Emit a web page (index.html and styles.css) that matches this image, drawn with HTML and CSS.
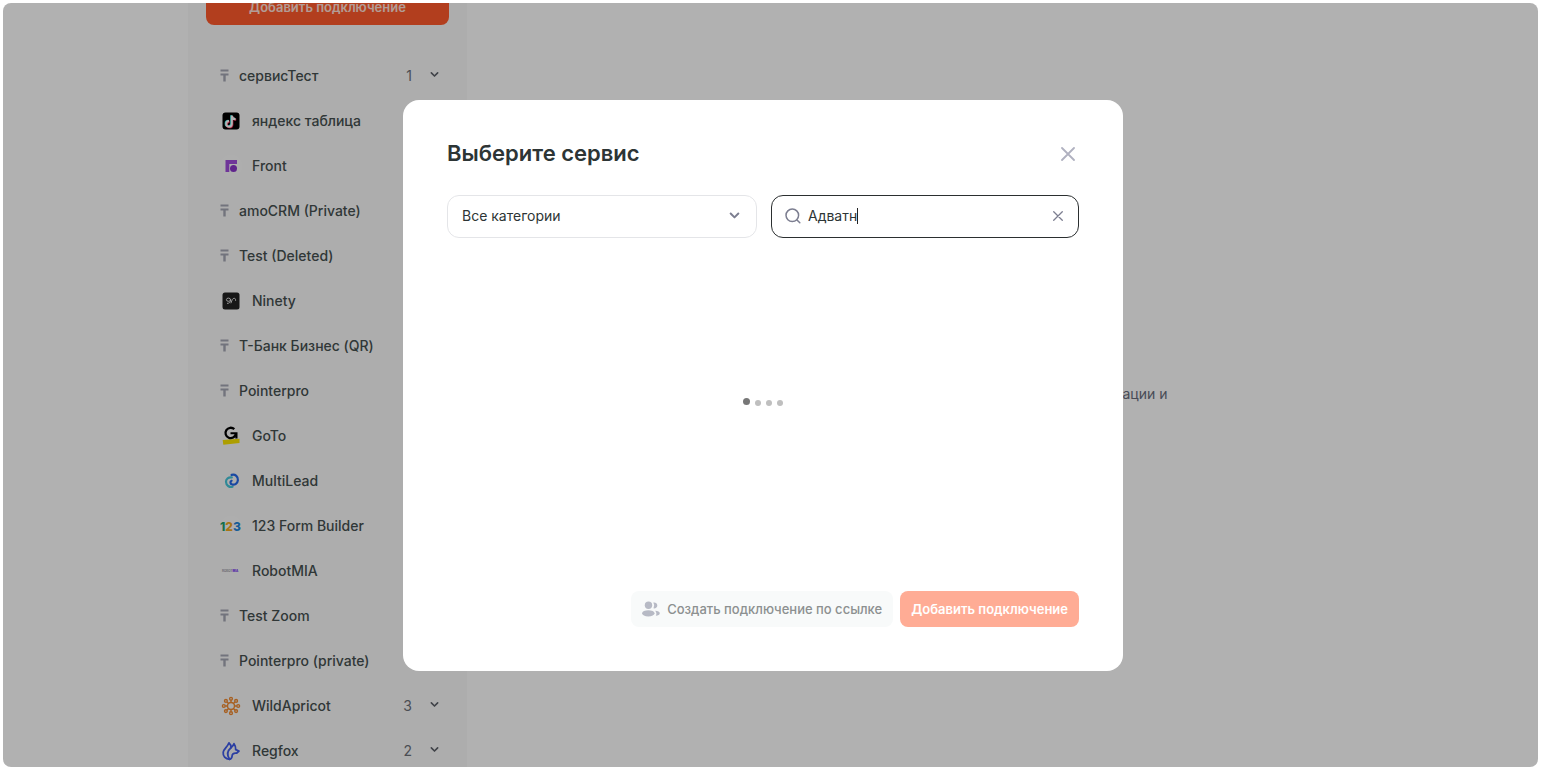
FILE: index.html
```html
<!DOCTYPE html>
<html lang="ru">
<head>
  <meta charset="UTF-8" />
  <meta name="viewport" content="width=device-width, initial-scale=1.0"/>
  <title>Подключения</title>
  <link rel="stylesheet" href="styles.css">
</head>
<body>
<svg class="sprite" aria-hidden="true">
  <symbol id="tenge" viewBox="0 0 9 13">
    <path d="M0.500 0.500h8v2h-8zM0.500 4.500h8v2H5.700V12.500H3.300V6.500H0.500z"/>
  </symbol>
  <symbol id="chevron" viewBox="0 0 10 10">
    <path d="M1.500 3.200 5 6.700l3.500-3.500" fill="none" stroke="currentColor" stroke-width="1.800" stroke-linecap="round" stroke-linejoin="round"/>
  </symbol>
  <symbol id="cross" viewBox="0 0 14 14">
    <path d="M1 1l12 12M13 1 1 13" fill="none" stroke="currentColor" stroke-width="1.800" stroke-linecap="round"/>
  </symbol>
</svg>

<div class="app">
  <div class="page">
    <aside class="sidebar">
      <button type="button" class="btn btn-primary">Добавить подключение</button>
      <ul class="services">
        <li class="service">
          <svg class="mark"><use href="#tenge"/></svg>
          <span class="name">сервисТест</span>
          <span class="count">1</span>
          <svg class="arrow"><use href="#chevron"/></svg>
        </li>
        <li class="service">
          <svg class="logo" viewBox="0 0 22 22">
            <rect x="2.500" y="2.500" width="17" height="17" rx="3" fill="#000"/>
            <g fill="none" stroke-width="2">
              <path d="M11.200 5.300v8.300a2.800 2.800 0 1 1-2.800-2.900M11.200 5.600c.3 1.900 1.600 3 3.800 3.200" stroke="#25f4ee"/>
              <path d="M12.400 6.300v8.300a2.800 2.800 0 1 1-2.800-2.900M12.400 6.600c.3 1.900 1.600 3 3.800 3.200" stroke="#fe2c55"/>
              <path d="M11.800 5.500V14A2.800 2.800 0 1 1 9 11.100M11.800 6c.3 1.900 1.600 3 3.800 3.200" stroke="#fff"/>
            </g>
          </svg>
          <span class="name">яндекс таблица</span>
        </li>
        <li class="service">
          <svg class="logo" viewBox="0 0 22 22">
            <circle cx="11" cy="11" r="11" fill="#fff" opacity=".35"/>
            <path d="M5.500 5h11.500v4H9.300v8H5.500z" fill="#a04ddc"/>
            <circle cx="13.500" cy="13.500" r="3.500" fill="#8934c9"/>
          </svg>
          <span class="name">Front</span>
        </li>
        <li class="service">
          <svg class="mark"><use href="#tenge"/></svg>
          <span class="name">amoCRM (Private)</span>
        </li>
        <li class="service">
          <svg class="mark"><use href="#tenge"/></svg>
          <span class="name">Test (Deleted)</span>
        </li>
        <li class="service">
          <svg class="logo" viewBox="0 0 22 22">
            <rect x="2.500" y="2.500" width="17" height="17" rx="2.500" fill="#222"/>
            <g fill="none" stroke="#ddd" stroke-width="1" stroke-linecap="round">
              <path d="M10.600 9.700a2.100 1.600 0 1 0-2.300 1.600c1.300 0 2.300-.8 2.300-1.800 0 2.600-1.100 3.900-3.200 3.900"/>
              <path d="M11 12.900c1-3.200 1.700-4.600 3.200-4.600 1.100 0 1.500.8 1.400 2.100"/>
            </g>
          </svg>
          <span class="name">Ninety</span>
        </li>
        <li class="service">
          <svg class="mark"><use href="#tenge"/></svg>
          <span class="name">Т-Банк Бизнес (QR)</span>
        </li>
        <li class="service">
          <svg class="mark"><use href="#tenge"/></svg>
          <span class="name">Pointerpro</span>
        </li>
        <li class="service">
          <svg class="logo" viewBox="0 0 22 22">
            <path d="M2.700 15 19.500 13.800v4.200L3.300 19.800z" fill="#f8e300"/>
            <path d="M14.300 4.200A5.200 5.200 0 1 0 15.800 9" fill="none" stroke="#000" stroke-width="2.300"/>
            <path d="M10.500 7.200h7v6.200h-2.200V9.300h-4.800z" fill="#000"/>
          </svg>
          <span class="name">GoTo</span>
        </li>
        <li class="service">
          <svg class="logo" viewBox="0 0 22 22" fill="none" stroke-width="2.200" stroke-linecap="round">
            <path d="M11.800 7.400c-3.300-.5-5.900 1.400-5.800 4.400.1 3.700 3.400 5.800 6.600 5" stroke="#45c5d8"/>
            <path d="M11.600 4.900c3.800-1 6.600 1.700 6.300 5.200-.3 3.200-3.200 5.100-5.700 4.400-2-.6-2.400-2.900-.6-3.700" stroke="#2468e8"/>
          </svg>
          <span class="name">MultiLead</span>
        </li>
        <li class="service">
          <svg class="logo logo-123" viewBox="0 0 22 22">
            <circle cx="11" cy="11" r="10.500" fill="#fff" opacity=".25"/>
            <text x="0" y="15.500"><tspan class="one">1</tspan><tspan class="two">2</tspan><tspan class="three">3</tspan></text>
          </svg>
          <span class="name">123 Form Builder</span>
        </li>
        <li class="service">
          <svg class="logo logo-robot" viewBox="0 0 22 22">
            <text x="2" y="12">ROBOT<tspan class="mia">MIA</tspan></text>
          </svg>
          <span class="name">RobotMIA</span>
        </li>
        <li class="service">
          <svg class="mark"><use href="#tenge"/></svg>
          <span class="name">Test Zoom</span>
        </li>
        <li class="service">
          <svg class="mark"><use href="#tenge"/></svg>
          <span class="name">Pointerpro (private)</span>
        </li>
        <li class="service">
          <svg class="logo" viewBox="0 0 22 22" fill="none" stroke="#ef8a32" stroke-width="1.400">
            <circle cx="11" cy="11" r="3.500"/>
            <path d="M11 5.300v2.200M11 14.500v2.200M5.300 11h2.200M14.500 11h2.200M7 7l1.600 1.600M13.400 13.400 15 15M15 7l-1.600 1.600M8.600 13.400 7 15"/>
            <g>
              <circle cx="11" cy="3.800" r="1.400"/><circle cx="11" cy="18.200" r="1.400"/>
              <circle cx="3.800" cy="11" r="1.400"/><circle cx="18.200" cy="11" r="1.400"/>
              <circle cx="5.900" cy="5.900" r="1.400"/><circle cx="16.100" cy="16.100" r="1.400"/>
              <circle cx="16.100" cy="5.900" r="1.400"/><circle cx="5.900" cy="16.100" r="1.400"/>
            </g>
          </svg>
          <span class="name">WildApricot</span>
          <span class="count">3</span>
          <svg class="arrow"><use href="#chevron"/></svg>
        </li>
        <li class="service">
          <svg class="logo" viewBox="0 0 22 22" fill="none" stroke="#3f5be8" stroke-width="1.800" stroke-linejoin="round" stroke-linecap="round">
            <path d="M9.600 19.300c-4.300-.3-6.800-3.300-6.400-7C3.600 8.700 7.600 7 9 2.800c1.500 1.400 2.200 3 2.200 4.800"/>
            <path d="M9.600 19.300C6.500 14.700 7.200 11 10.500 8.200c1.600-1.400 3-2.700 3.500-4.500 1.600 2 1.700 4.500 1.700 6l3.300 1.300-2.500 2.200c-3-.4-4.300.8-4.500 3.300-.1 1.500-1.100 2.500-2.400 2.800z"/>
          </svg>
          <span class="name">Regfox</span>
          <span class="count">2</span>
          <svg class="arrow"><use href="#chevron"/></svg>
        </li>
      </ul>
    </aside>
    <main class="content">
      <p class="hint">ации и</p>
    </main>
  </div>

  <div class="overlay">
    <div class="modal" role="dialog" aria-modal="true" aria-labelledby="modal-title">
      <header class="modal-head">
        <h2 id="modal-title">Выберите сервис</h2>
        <button type="button" class="icon-btn close" aria-label="Закрыть">
          <svg><use href="#cross"/></svg>
        </button>
      </header>

      <div class="filters">
        <div class="field">
          <select class="category" aria-label="Категория">
            <option>Все категории</option>
          </select>
          <svg class="select-arrow"><use href="#chevron"/></svg>
        </div>
        <div class="field field-active">
          <svg class="search-icon" viewBox="0 0 16 16" fill="none" stroke="currentColor" stroke-width="1.500" stroke-linecap="round">
            <circle cx="7.300" cy="7.300" r="6.300"/>
            <path d="M12 12l2.800 2.800"/>
          </svg>
          <input type="text" class="search" value="Адватн" aria-label="Поиск сервиса"/>
          <span class="caret"></span>
          <button type="button" class="icon-btn clear" aria-label="Очистить">
            <svg><use href="#cross"/></svg>
          </button>
        </div>
      </div>

      <div class="loader">
        <span class="dot dot-active"></span>
        <span class="dot"></span>
        <span class="dot"></span>
        <span class="dot"></span>
      </div>

      <footer class="modal-foot">
        <button type="button" class="btn btn-secondary" disabled>
          <svg class="people" viewBox="0 0 18 16">
            <circle cx="6.500" cy="4.200" r="3.700"/>
            <ellipse cx="6.300" cy="12.300" rx="6.200" ry="3.100"/>
            <path d="M11.300 1.600a3 3 0 1 1 .2 5.700 5.400 5.400 0 0 0-.2-5.700zM13.200 9.700c2.600.1 4.600 1.100 4.600 2.500 0 1.400-1.700 2.300-4 2.500 1-1.700.7-3.600-.6-5z"/>
          </svg>
          Создать подключение по ссылке
        </button>
        <button type="button" class="btn btn-primary" disabled>Добавить подключение</button>
      </footer>
    </div>
  </div>
</div>
</body>
</html>
```
FILE: styles.css
```css
* {
  box-sizing: border-box;
}
body {
  margin: 0;
  padding: 3px;
  height: 100vh;
  background: #fff;
  font-family: Inter, "Liberation Sans", sans-serif;
  font-size: 14px;
  color: #2d3535;
}
button, input, select {
  font-family: inherit;
  font-size: inherit;
  color: inherit;
}
.sprite {
  display: none;
}
.app {
  position: relative;
  height: 100%;
  padding-right: 15px;
  border-radius: 8px;
  overflow: hidden;
  background: #fefefe;
}
.page {
  display: flex;
  max-width: 1150px;
  margin: 0 auto;
}

/* sidebar */
.sidebar {
  width: 279px;
  margin-top: -14px;
  padding: 0 18px;
  background: #f8f8f8;
}
.btn {
  display: flex;
  align-items: center;
  justify-content: center;
  height: 36px;
  padding: 0 11px;
  border: none;
  border-radius: 8px;
  font-size: 13px;
  font-weight: 600;
}
.btn-primary {
  background: #ff5a2c;
  color: #fff;
}
.sidebar .btn {
  width: 100%;
  color: #ffe0d8;
}
.services {
  margin: 28px 0 0;
  padding: 0;
  list-style: none;
}
.service {
  display: flex;
  align-items: center;
  gap: 10px;
  height: 45px;
  padding: 0 9px 0 14px;
}
.mark {
  width: 9px;
  height: 13px;
  fill: #a4a6b4;
}
.logo {
  width: 22px;
  height: 22px;
}
.logo-123 text {
  font-size: 12px;
  font-weight: 800;
}
.logo-123 .one {
  fill: #23a06c;
}
.logo-123 .two {
  fill: #f3a81e;
}
.logo-123 .three {
  fill: #2385d8;
}
.logo-robot text {
  font-size: 3px;
  font-weight: 600;
  fill: #8c8c98;
}
.logo-robot .mia {
  font-weight: 800;
  fill: #7a3ff0;
}
.name {
  flex: 1;
  font-weight: 500;
  color: #465050;
}
.count {
  color: #6c7078;
}
.arrow {
  width: 9px;
  height: 9px;
  margin: 0 1px 2px 8px;
  color: #5c6068;
}

.content {
  flex: 1;
}
.hint {
  max-width: 530px;
  margin: 381px auto 0;
  line-height: 20px;
  text-align: right;
  color: #686c7c;
}

/* modal */
.overlay {
  position: absolute;
  inset: 0;
  display: flex;
  align-items: center;
  justify-content: center;
  padding-right: 15px;
  background: rgba(0,0,0,0.3);
}
.modal {
  display: flex;
  flex-direction: column;
  width: 720px;
  max-width: 100%;
  min-height: 571px;
  padding: 39px 44px 44px;
  border-radius: 16px;
  background: #fff;
}
.modal-head {
  display: flex;
  align-items: center;
  justify-content: space-between;
  height: 28px;
  margin-bottom: 28px;
}
.modal-head h2 {
  margin: 0;
  font-size: 22px;
  font-weight: 600;
  line-height: 28px;
}
.icon-btn {
  display: flex;
  padding: 4px;
  border: none;
  background: none;
}
.close {
  margin-top: 2px;
  color: #b0b1c0;
}
.close svg {
  width: 14px;
  height: 14px;
}
.filters {
  display: flex;
  gap: 14px;
}
.field {
  flex: 1;
  display: flex;
  align-items: center;
  height: 43px;
  padding: 0 14px 1px;
  border: 1px solid #e4e5e8;
  border-radius: 12px;
}
.field-active {
  padding: 0 13px 1px;
  border-color: #2b2f30;
}
.category {
  flex: 1;
  padding: 0;
  border: none;
  outline: none;
  appearance: none;
  background: none;
}
.select-arrow {
  width: 11px;
  height: 11px;
  margin-right: 2px;
  color: #7c7e90;
}
.search-icon {
  width: 16px;
  height: 16px;
  margin-right: 7px;
  color: #7c7e90;
}
.search {
  field-sizing: content;
  padding: 0;
  border: none;
  outline: none;
}
.caret {
  width: 1px;
  height: 16px;
  background: #222;
}
.clear {
  margin-left: auto;
  padding: 2px;
  color: #7c7e90;
}
.clear svg {
  width: 10px;
  height: 10px;
}
.loader {
  flex: 1;
  display: flex;
  align-items: center;
  justify-content: center;
  gap: 5px;
}
.dot {
  width: 6px;
  height: 6px;
  border-radius: 50%;
  background: #bfbfbf;
}
.dot-active {
  width: 7px;
  height: 7px;
  margin-bottom: 2px;
  background: #777;
}
.modal-foot {
  display: flex;
  justify-content: flex-end;
  gap: 7px;
  padding-top: 23px;
}
.btn-secondary {
  gap: 7px;
  font-weight: 500;
  background: #f8fafa;
  color: #8c9090;
}
.people {
  width: 18px;
  height: 16px;
  fill: #b7bac5;
}
.modal-foot .btn-primary {
  background: #ffac95;
}
```
